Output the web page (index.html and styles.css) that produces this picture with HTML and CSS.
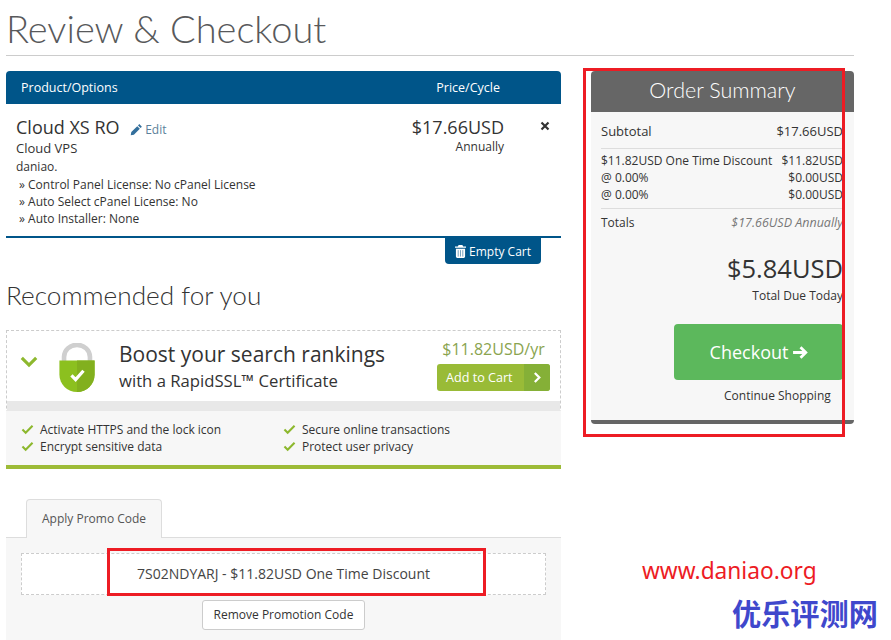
FILE: index.html
```html
<!DOCTYPE html>
<html lang="en">
<head>
  <meta charset="UTF-8">
  <title>Review &amp; Checkout</title>
  <link rel="stylesheet" href="styles.css">
</head>
<body>

<div class="container">
  <h1 class="page-title">Review &amp; Checkout</h1>

  <div class="columns">
    <div class="main-col">
      <!-- cart table -->
      <div class="cart-head">
        <span>Product/Options</span>
        <span class="cart-head-price">Price/Cycle</span>
      </div>
      <div class="cart-item">
        <div class="item-info">
          <div class="item-name">Cloud XS RO
            <a class="edit-link">
              <svg class="icon-pencil" viewBox="0 0 14 14"><path d="M10 1.2L12.8 4l-1.4 1.4L8.6 2.6zM7.8 3.4l2.8 2.8-6.4 6.4-3.400.6.6-3.400z"/></svg>Edit</a>
          </div>
          <div class="item-group">Cloud VPS</div>
          <div class="item-domain">daniao.</div>
          <div class="item-opt">» Control Panel License: No cPanel License</div>
          <div class="item-opt">» Auto Select cPanel License: No</div>
          <div class="item-opt">» Auto Installer: None</div>
        </div>
        <div class="item-price">
          <div class="price-big">$17.66USD</div>
          <div class="price-cycle">Annually</div>
        </div>
        <div class="item-remove">
          <svg viewBox="0 0 10 10"><path d="M1.5 1.5l7 7M8.5 1.5l-7 7"/></svg>
        </div>
      </div>
      <div class="cart-actions">
        <a class="btn-empty">
          <svg class="icon-trash" viewBox="0 0 12 14"><path d="M4 0h4l1 1.5h3V3H0V1.5h3zM1 4h10v8.5A1.5 1.5 0 0 1 9.5 14h-7A1.5 1.5 0 0 1 1 12.500z"/><path class="trash-lines" d="M3.5 5.5v7M6 5.5v7M8.5 5.5v7"/></svg>Empty Cart</a>
      </div>

      <h2 class="section-title">Recommended for you</h2>

      <!-- ssl upsell -->
      <div class="promo-card">
        <div class="promo-top">
          <svg class="promo-chevron" viewBox="0 0 20 14"><path d="M2 3l8 8 8-8"/></svg>
          <svg class="promo-lock" viewBox="0 0 40 54">
            <path d="M6 20V15a14 13 0 0 1 28 0v5" fill="none" stroke="#cfcfcf" stroke-width="5"/>
            <path d="M1 19h38v15a19 19 0 0 1-38 0z" fill="#8cc01f"/>
            <path d="M20 19h19v15a19 19 0 0 1-19 19z" fill="#82b01e"/>
            <path d="M14 35l4.5 4.5L27 30" fill="none" stroke="#fff" stroke-width="3.5"/>
          </svg>
          <div class="promo-text">
            <div class="promo-headline">Boost your search rankings</div>
            <div class="promo-sub">with a RapidSSL™ Certificate</div>
          </div>
          <div class="promo-buy">
            <div class="promo-price">$11.82USD/yr</div>
            <a class="btn-add">
              <span class="btn-add-label">Add to Cart</span>
              <span class="btn-add-arrow"><svg viewBox="0 0 10 14"><path d="M2 2l5 5-5 5"/></svg></span>
            </a>
          </div>
        </div>
        <div class="promo-band"></div>
        <div class="promo-features">
          <div class="feature"><svg class="tick" viewBox="0 0 14 12"><path d="M1.5 6L5 9.5 12.5 2"/></svg>Activate HTTPS and the lock icon</div>
          <div class="feature"><svg class="tick" viewBox="0 0 14 12"><path d="M1.5 6L5 9.5 12.5 2"/></svg>Secure online transactions</div>
          <div class="feature"><svg class="tick" viewBox="0 0 14 12"><path d="M1.5 6L5 9.5 12.5 2"/></svg>Encrypt sensitive data</div>
          <div class="feature"><svg class="tick" viewBox="0 0 14 12"><path d="M1.5 6L5 9.5 12.5 2"/></svg>Protect user privacy</div>
        </div>
      </div>

      <!-- promo code -->
      <div class="tabs">
        <div class="tab">Apply Promo Code</div>
      </div>
      <div class="tab-panel">
        <div class="applied-code">7S02NDYARJ - $11.82USD One Time Discount</div>
        <a class="btn-remove">Remove Promotion Code</a>
      </div>
    </div>

    <div class="summary">
      <div class="summary-head">Order Summary</div>
      <div class="summary-body">
        <div class="sum-row sum-first"><span>Subtotal</span><span>$17.66USD</span></div>
        <div class="sum-group">
          <div class="sum-row"><span>$11.82USD One Time Discount</span><span>$11.82USD</span></div>
          <div class="sum-row"><span>@ 0.00%</span><span>$0.00USD</span></div>
          <div class="sum-row"><span>@ 0.00%</span><span>$0.00USD</span></div>
        </div>
        <div class="sum-row sum-totals"><span>Totals</span><em>$17.66USD Annually</em></div>
        <div class="due-amount">$5.84USD</div>
        <div class="due-label">Total Due Today</div>
        <div class="checkout-wrap">
          <a class="btn-checkout">Checkout
            <svg viewBox="0 0 16 14"><path d="M1 7h12M8 2l5 5-5 5"/></svg>
          </a>
        </div>
        <div class="continue">Continue Shopping</div>
      </div>
    </div>
  </div>
</div>

<!-- annotations pasted on top of the screenshot -->
<div class="mark mark-summary"></div>
<div class="mark mark-code"></div>
<div class="stamp-url">www.daniao.org</div>
<div class="stamp-name">优乐评测网</div>

</body>
</html>
```

FILE: styles.css
```css
html, body {
  margin: 0;
  height: 640px;
  overflow: hidden;
}
body {
  position: relative;
  font-family: 'Open Sans', sans-serif;
  font-size: 12px;
  color: #333;
  background-color: #fff;
}
.container {
  padding-left: 6px;
}
.page-title {
  width: 848px;
  height: 55px;
  margin: 0 0 15px;
  border-bottom: 1px solid #ccc;
  font-family: 'Lato', sans-serif;
  font-weight: 300;
  font-size: 38px;
  line-height: 56px;
  color: #58595b;
}
.columns {
  display: flex;
  gap: 30px;
}
.main-col {
  width: 555px;
}

/* cart table */
.cart-head {
  display: flex;
  height: 33px;
  align-items: center;
  padding-left: 15px;
  background-color: #005589;
  border-radius: 4px 4px 0 0;
  color: #fff;
  font-size: 12.5px;
}
.cart-head-price {
  margin-left: auto;
  margin-right: 61px;
}
.cart-item {
  display: flex;
  height: 134px;
  box-sizing: border-box;
  padding: 14px 11px 0 10px;
  border-bottom: 2px solid #005589;
}
.item-info {
  flex: 1;
}
.item-name {
  font-size: 18px;
  line-height: 18px;
}
.edit-link {
  margin-left: 6px;
  font-size: 12px;
  color: #5b7f9b;
}
.icon-pencil {
  width: 13px;
  height: 13px;
  margin-right: 2px;
  vertical-align: -2px;
  fill: #336f9c;
}
.item-group {
  font-size: 13px;
  line-height: 19px;
}
.item-domain {
  line-height: 18px;
}
.item-opt {
  padding-left: 3px;
  line-height: 17px;
}
.item-price {
  text-align: right;
}
.price-big {
  font-size: 18px;
  line-height: 18px;
}
.price-cycle {
  margin-top: 1px;
  line-height: 20px;
}
.item-remove {
  width: 46px;
  text-align: right;
}
.item-remove svg {
  width: 10px;
  height: 10px;
  margin-top: 1px;
  fill: none;
  stroke: #333;
  stroke-width: 2.2;
}
.cart-actions {
  display: flex;
  justify-content: flex-end;
  padding-right: 20px;
}
.btn-empty {
  display: flex;
  align-items: center;
  height: 26px;
  padding: 0 10px;
  background-color: #005589;
  border-radius: 0 0 4px 4px;
  color: #fff;
  font-size: 12px;
}
.icon-trash {
  width: 11px;
  height: 13px;
  margin-right: 3px;
  fill: #fff;
}
.trash-lines {
  fill: none;
  stroke: #6d9dbb;
  stroke-width: 1;
}
.section-title {
  margin: 16px 0 20px;
  font-family: 'Lato', sans-serif;
  font-weight: 300;
  font-size: 26.2px;
  line-height: 30px;
  color: #333;
}

/* ssl upsell card */
.promo-card {
  border: 1px dashed #ccc;
  border-bottom: 0;
}
.promo-top {
  display: flex;
  align-items: flex-start;
  height: 70px;
}
.promo-chevron {
  width: 18px;
  height: 13px;
  margin: 24px 0 0 13px;
  fill: none;
  stroke: #8db82e;
  stroke-width: 3.5;
}
.promo-lock {
  width: 38px;
  height: 50px;
  margin: 12px 0 0 20px;
}
.promo-text {
  flex: 1;
  margin: 8px 0 0 23px;
}
.promo-headline {
  font-size: 21px;
  line-height: 30px;
}
.promo-sub {
  font-size: 16.7px;
  line-height: 24px;
}
.promo-buy {
  margin: 8px 10px 0 0;
}
.promo-price {
  font-size: 16px;
  line-height: 21px;
  text-align: center;
  color: #8aa44f;
  margin-bottom: 4px;
}
.btn-add {
  display: flex;
  width: 113px;
  height: 27px;
  margin-left: auto;
  border-radius: 3px;
  overflow: hidden;
  color: #fff;
  font-size: 12.6px;
  line-height: 27px;
  background-color: #99bb37;
}
.btn-add-label {
  flex: 1;
  padding-left: 9px;
}
.btn-add-arrow {
  display: flex;
  align-items: center;
  justify-content: center;
  width: 26px;
  background-color: #85b037;
}
.btn-add-arrow svg {
  width: 9px;
  height: 13px;
  fill: none;
  stroke: #fff;
  stroke-width: 2.5;
}
.promo-band {
  height: 10px;
  background-color: #e8e8e8;
}
.promo-features {
  display: grid;
  grid-template-columns: 262px 1fr;
  align-content: start;
  height: 58px;
  box-sizing: border-box;
  margin: 0 -1px;
  padding: 10px 0 0 15px;
  background-color: #f7f7f7;
  border-bottom: 4px solid #9dbb37;
  line-height: 17px;
}
.feature {
  display: flex;
  align-items: center;
}
.tick {
  width: 13px;
  height: 11px;
  margin-right: 6px;
  fill: none;
  stroke: #8db82e;
  stroke-width: 2.3;
}

/* promo code tab */
.tabs {
  display: flex;
  margin-top: 30px;
  padding-left: 20px;
  border-bottom: 1px solid #ddd;
}
.tab {
  height: 38px;
  margin-bottom: -1px;
  padding: 0 15px;
  line-height: 38px;
  background-color: #f7f7f7;
  border: 1px solid #ddd;
  border-bottom: 0;
  border-radius: 4px 4px 0 0;
  color: #555;
}
.tab-panel {
  display: flex;
  flex-direction: column;
  align-items: center;
  height: 102px;
  box-sizing: border-box;
  padding: 15px 15px 0;
  background-color: #f7f7f7;
}
.applied-code {
  width: 100%;
  height: 42px;
  box-sizing: border-box;
  border: 1px dashed #ccc;
  background-color: #fff;
  text-align: center;
  line-height: 40px;
  font-size: 14px;
  color: #444;
}
.btn-remove {
  margin-top: 5px;
  padding: 0 11px;
  height: 30px;
  line-height: 28px;
  box-sizing: border-box;
  background-color: #fff;
  border: 1px solid #ccc;
  border-radius: 3px;
}

/* order summary */
.summary {
  width: 263px;
  height: 353px;
  box-sizing: border-box;
  background-color: #f7f7f7;
  border-bottom: 4px solid #666;
  border-radius: 4px;
  overflow: hidden;
}
.summary-head {
  height: 41px;
  line-height: 39px;
  background-color: #666;
  color: #fff;
  text-align: center;
  font-family: 'Lato', sans-serif;
  font-weight: 300;
  font-size: 21.5px;
}
.summary-body {
  width: 242px;
  padding-left: 10px;
  white-space: nowrap;
}
.sum-row {
  display: flex;
  justify-content: space-between;
  line-height: 17px;
}
.sum-first {
  padding: 11px 0 8px;
  font-size: 13px;
  border-bottom: 1px solid #ddd;
}
.sum-group {
  padding: 3px 0 5px;
  border-bottom: 1px solid #ddd;
}
.sum-totals {
  padding-top: 5px;
}
.sum-totals em {
  font-size: 12.5px;
  color: #777;
}
.due-amount {
  margin-top: 21px;
  text-align: right;
  font-size: 25.5px;
  line-height: 33px;
}
.due-label {
  margin-top: 1px;
  text-align: right;
  line-height: 20px;
}
.checkout-wrap {
  display: flex;
  justify-content: flex-end;
  margin-top: 18px;
}
.btn-checkout {
  display: flex;
  align-items: center;
  justify-content: center;
  gap: 4px;
  width: 169px;
  height: 56px;
  box-sizing: border-box;
  padding-left: 2px;
  background-color: #5cb85c;
  border-radius: 4px;
  color: #fff;
  font-size: 18px;
}
.btn-checkout svg {
  width: 17px;
  height: 15px;
  fill: none;
  stroke: #fff;
  stroke-width: 2.6;
}
.continue {
  margin-top: 7px;
  padding-left: 123px;
  line-height: 18px;
}

/* annotations */
.mark {
  position: absolute;
  box-sizing: border-box;
  border: 3px solid #ed1c24;
}
.mark-summary {
  left: 583px;
  top: 68px;
  width: 262px;
  height: 369px;
}
.mark-code {
  left: 107px;
  top: 548px;
  width: 379px;
  height: 48px;
}
.stamp-url {
  position: absolute;
  left: 642px;
  top: 556px;
  font-family: 'Noto Sans', sans-serif;
  font-size: 22.7px;
  line-height: 30px;
  color: #ed1c24;
}
.stamp-name {
  position: absolute;
  left: 732px;
  top: 592px;
  font-family: 'Noto Sans CJK SC', sans-serif;
  font-weight: 700;
  font-size: 29.2px;
  line-height: 40px;
  color: #3f48cc;
}
```
